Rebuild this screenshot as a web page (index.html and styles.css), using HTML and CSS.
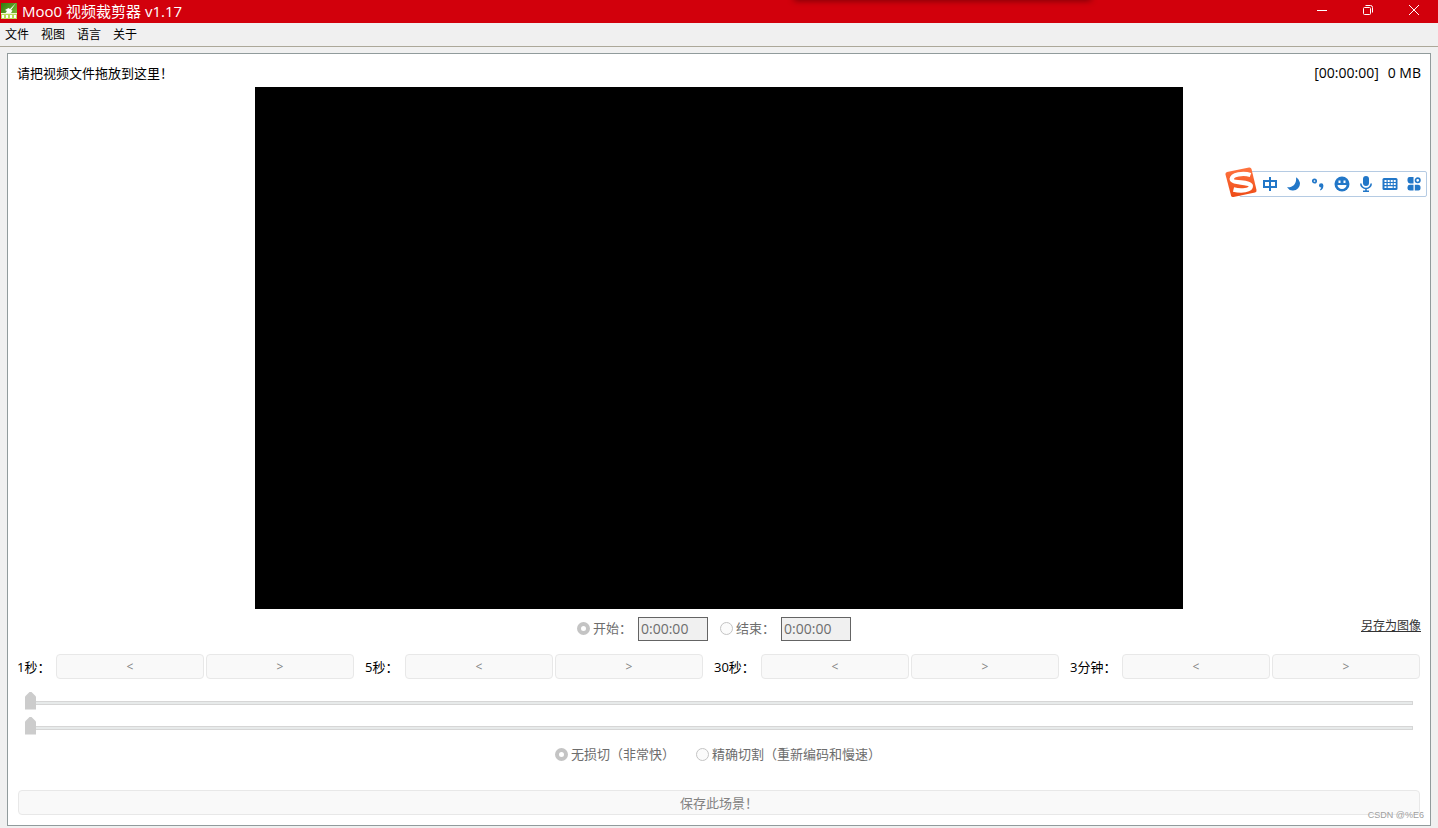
FILE: index.html
```html
<!DOCTYPE html>
<html lang="zh-CN">
<head>
<meta charset="utf-8">
<title>Moo0 视频裁剪器 v1.17</title>
<link rel="stylesheet" href="styles.css">
</head>
<body>
<header class="titlebar">
  <svg class="app-icon" width="16" height="16" viewBox="0 0 16 16" aria-hidden="true">
    <defs><linearGradient id="leaf" x1="0" y1="0" x2="1" y2="1"><stop offset="0" stop-color="#2f7a10"/><stop offset="1" stop-color="#8cc63a"/></linearGradient></defs>
    <rect width="16" height="16" fill="url(#leaf)"/>
    <path d="M0 10h16v6H0z" fill="#b9dc5a"/>
    <path d="M15 0L9 6 7.500 5 4 7l2 1-1.500 2H10l1.500-2.500L10 7z" fill="#fff"/>
    <path d="M1 12h2v3H1zM5 12h2v3H5zM9 12h2v3H9zM13 12h2v3h-2z" fill="#fff"/>
    <path d="M0 10h16v1H0z" fill="#eef7d0"/>
  </svg>
  <h1 class="title">Moo0 视频裁剪器 v1.17</h1>
  <div class="window-buttons">
    <button class="window-button" aria-label="最小化"><svg width="12" height="12" viewBox="0 0 12 12"><path d="M1 6.5h10"/></svg></button>
    <button class="window-button" aria-label="还原"><svg width="12" height="12" viewBox="0 0 12 12"><rect x="1.5" y="3.5" width="7" height="7" rx="1"/><path d="M3.5 1.5h5a2 2 0 0 1 2 2v5"/></svg></button>
    <button class="window-button" aria-label="关闭"><svg width="12" height="12" viewBox="0 0 12 12"><path d="M1 1l10 10M11 1L1 11"/></svg></button>
  </div>
  <div class="top-shadow"></div>
</header>
<nav class="menubar">
  <button class="menu-item">文件</button>
  <button class="menu-item">视图</button>
  <button class="menu-item">语言</button>
  <button class="menu-item">关于</button>
</nav>
<main class="panel">
  <div class="info">
    <span>请把视频文件拖放到这里！</span>
    <span class="stats"><span>[00:00:00]</span><span>0 MB</span></span>
  </div>
  <div class="stage">
    <svg class="screen" viewBox="0 0 16 9" role="img" aria-label="视频画面"><rect width="16" height="9"/></svg>
  </div>
  <div class="range-row">
    <div class="range-fields">
      <label class="choice"><input class="radio" type="radio" name="edge" checked disabled>开始：</label>
      <input class="time" type="text" value="0:00:00" aria-label="开始时间" disabled>
      <label class="choice choice-end"><input class="radio" type="radio" name="edge" disabled>结束：</label>
      <input class="time" type="text" value="0:00:00" aria-label="结束时间" disabled>
    </div>
    <a class="save-image" href="#">另存为图像</a>
  </div>
  <div class="steps">
    <span>1秒：</span><button class="button" disabled>&lt;</button><button class="button" disabled>&gt;</button>
    <span class="step-label">5秒：</span><button class="button" disabled>&lt;</button><button class="button" disabled>&gt;</button>
    <span class="step-label">30秒：</span><button class="button" disabled>&lt;</button><button class="button" disabled>&gt;</button>
    <span class="step-label">3分钟：</span><button class="button" disabled>&lt;</button><button class="button" disabled>&gt;</button>
  </div>
  <div class="sliders">
    <input class="slider" type="range" value="0" aria-label="开始位置" disabled>
    <input class="slider" type="range" value="0" aria-label="结束位置" disabled>
  </div>
  <div class="modes">
    <label class="choice"><input class="radio" type="radio" name="mode" checked disabled>无损切（非常快）</label>
    <label class="choice"><input class="radio" type="radio" name="mode" disabled>精确切割（重新编码和慢速）</label>
  </div>
  <button class="button save" disabled>保存此场景！</button>
</main>
<aside class="ime" aria-label="输入法">
  <svg class="ime-logo" width="32" height="32" viewBox="0 0 32 32" aria-hidden="true">
    <defs><linearGradient id="flame" x1="0" y1="0" x2="0" y2="1"><stop offset="0" stop-color="#ff7440"/><stop offset="1" stop-color="#ee4b16"/></linearGradient></defs>
    <path d="M2 5L24 .5q2-.4 2.500 1.500L31.500 23q.4 2-1.500 2.600L8.500 30q-2 .4-2.500-1.500L.5 7.500Q0 5.500 2 5z" fill="url(#flame)"/>
    <path d="M25.500 8C18 5.500 7 7.500 6.800 12c-.3 4.500 18.500 2.500 19 7 .3 4.500-9.500 5.500-17.300 3.500" fill="none" stroke="#fff" stroke-width="4.400"/>
  </svg>
  <button class="ime-button" aria-label="中文"><svg viewBox="0 0 16 16"><path class="line" d="M2 5h12v6H2zM8 1v14"/></svg></button>
  <button class="ime-button" aria-label="夜间"><svg viewBox="0 0 16 16"><path d="M10 1.200A7 7 0 1 1 1 11.200c5 .8 10-3 9-10z"/></svg></button>
  <button class="ime-button" aria-label="标点"><svg viewBox="0 0 16 16"><circle cx="4.500" cy="5" r="1.700" fill="none" stroke="#2277c8" stroke-width="1.700"/><path d="M9 9.500a2.200 2.200 0 1 1 4.400 0c0 2.500-1 4.200-3.200 5v-1.500c.8-.5 1-1 1-1.500A2.200 2 0 0 1 9 9.500z"/></svg></button>
  <button class="ime-button" aria-label="表情"><svg viewBox="0 0 16 16"><circle cx="8" cy="8" r="7.500"/><path d="M4.500 4.500h2V7h-2zM9.500 4.500h2V7h-2zM3.500 9h9a4.500 4 0 0 1-9 0z" fill="#fff"/></svg></button>
  <button class="ime-button" aria-label="语音"><svg viewBox="0 0 16 16"><rect x="5" y="0" width="6" height="10" rx="3"/><path d="M2.800 7.500a5.200 5 0 0 0 10.400 0M8 12.500V16" fill="none" stroke="#2277c8" stroke-width="1.600"/><path d="M5 14.500h6V16H5z"/></svg></button>
  <button class="ime-button" aria-label="软键盘"><svg viewBox="0 0 16 16"><rect x=".5" y="2" width="15" height="12" rx="1.500"/><path d="M2.500 4h2v2h-2zM5.700 4h2v2h-2zM8.700 4h2v2h-2zM11.700 4h2v2h-2zM2.500 7h2v2h-2zM5.700 7h2v2h-2zM8.700 7h2v2h-2zM11.700 7h2v2h-2zM2.500 10.200h2v1.800h-2zM5.700 10.200h5v1.800h-5zM11.700 10.200h2v1.800h-2z" fill="#fff"/></svg></button>
  <button class="ime-button" aria-label="工具箱"><svg viewBox="0 0 16 16"><path d="M3.500 1h4v6.500H4A3 3 0 0 1 1.500 5V3q0-2 2-2zM1.500 11A2.500 2.500 0 0 1 4 8.800h3.500v5.700h-3.500q-2.500 0-2.500-2zM8.800 8.800H12a2.500 2.500 0 0 1 2.500 2.500v1.200q0 2-2 2H8.800z"/><circle cx="11.700" cy="4.300" r="2.200" fill="none" stroke="#2277c8" stroke-width="1.700"/></svg></button>
</aside>
<div class="watermark">CSDN @%E6</div>
</body>
</html>
```
FILE: styles.css
```css
* { box-sizing: border-box; }
body {
  position: relative;
  display: flex;
  flex-direction: column;
  height: 100vh;
  min-height: 520px;
  margin: 0;
  padding-bottom: 2px;
  background: #f0f0f0;
  color: #000;
  font: 13px/20px "Open Sans", "Noto Sans CJK SC", sans-serif;
}
button, input { font: inherit; color: inherit; margin: 0; }
button { padding: 0; border: 0; background: none; }

.titlebar {
  position: relative;
  display: flex;
  align-items: center;
  height: 23px;
  padding: 0 1px 2px;
  overflow: hidden;
  background: #d2000c;
  color: #fff;
}
.title { flex: 1; margin: 0 0 0 5px; font-size: 15px; font-weight: 400; }
.window-buttons { display: flex; align-self: flex-start; }
.window-button { display: flex; align-items: center; justify-content: center; width: 46px; height: 20px; }
.window-button svg { fill: none; stroke: #fff; }
.top-shadow {
  position: absolute;
  top: -4px;
  left: 55.2%;
  width: 20.7%;
  height: 4px;
  box-shadow: 0 0 6px #500006;
}

.menubar {
  display: flex;
  gap: 12px;
  height: 24px;
  padding: 0 5px;
  border-bottom: 1px solid #aca899;
}
.menu-item { font-size: 12px; }

.panel {
  flex: 1;
  display: flex;
  flex-direction: column;
  min-height: 0;
  margin: 6px 7px 0;
  padding: 5px 9px 10px;
  border: 1px solid #919b9c;
  background: #fff;
}
.info { display: flex; justify-content: space-between; align-items: center; height: 28px; }
.stats { display: flex; gap: 9px; font-size: 14px; }
.stage { flex: 1 1 0; min-height: 0; }
.screen { display: block; width: 100%; height: 100%; fill: #000; }

.range-row { display: grid; grid-template-columns: 1fr auto 1fr; align-items: center; height: 40px; }
.range-fields { grid-column: 2; display: flex; align-items: center; padding-right: 10px; }
.choice { display: flex; align-items: center; gap: 3px; padding-bottom: 2px; color: #6d6d6d; }
.choice-end { margin-left: 12px; }
.radio {
  appearance: none;
  width: 13px;
  height: 13px;
  border: 1px solid #c4c4c4;
  border-radius: 50%;
  background: #fbfbfb;
}
.radio:checked { border-width: 4px; background: #fff; }
.time {
  width: 70px;
  height: 24px;
  margin-left: 6px;
  padding: 0 2px 2px;
  border: 1px solid #646464;
  border-radius: 0;
  background: #f0f0f0;
  color: #6d6d6d;
  font-size: 14px;
}
.save-image { justify-self: end; align-self: start; margin-top: 7px; color: #333; font-size: 12px; }

.steps {
  display: grid;
  grid-template-columns: 37px 1fr 1fr 47px 1fr 1fr 54px 1fr 1fr 59px 1fr 1fr;
  gap: 2px;
  align-items: center;
  margin: 5px 1px 11px 0;
  white-space: nowrap;
}
.step-label { padding-left: 9px; }
.button {
  height: 25px;
  border: 1px solid #e8e8e8;
  border-radius: 4px;
  background: #f9f9f9;
  color: #838383;
}
.steps .button { font-size: 12px; }

.sliders { display: flex; flex-direction: column; padding: 0 8px; }
.slider { appearance: none; width: 100%; height: 25px; background: none; }
.slider::-webkit-slider-runnable-track {
  height: 4px;
  border: 1px solid #d6d6d6;
  background: #e7eaea;
}
.slider::-webkit-slider-thumb {
  appearance: none;
  width: 11px;
  height: 18px;
  margin: -10px 0 0 -1px;
  background: #ccc;
  clip-path: polygon(0 5px, 5px 0, 6px 0, 11px 5px, 11px 18px, 0 18px);
}

.modes { display: flex; justify-content: center; align-items: center; gap: 21px; height: 30px; padding-right: 2px; }
.save { margin: 20px 1px 0; }

.ime {
  position: absolute;
  top: 171px;
  right: 11px;
  display: flex;
  align-items: center;
  gap: 8px;
  height: 26px;
  padding: 0 4px 0 22px;
  border: 1px solid #b5cbe3;
  border-radius: 2px;
  background: #fff;
}
.ime-logo { position: absolute; left: -15px; top: -5px; }
.ime-button { display: flex; width: 16px; height: 16px; }
.ime-button svg { width: 16px; height: 16px; fill: #2277c8; }
.ime-button .line { fill: none; stroke: #2277c8; stroke-width: 2; }

.watermark {
  position: absolute;
  right: 14px;
  bottom: 7px;
  color: #a0a0a0;
  font: 9px/12px "Liberation Sans", sans-serif;
}
```
